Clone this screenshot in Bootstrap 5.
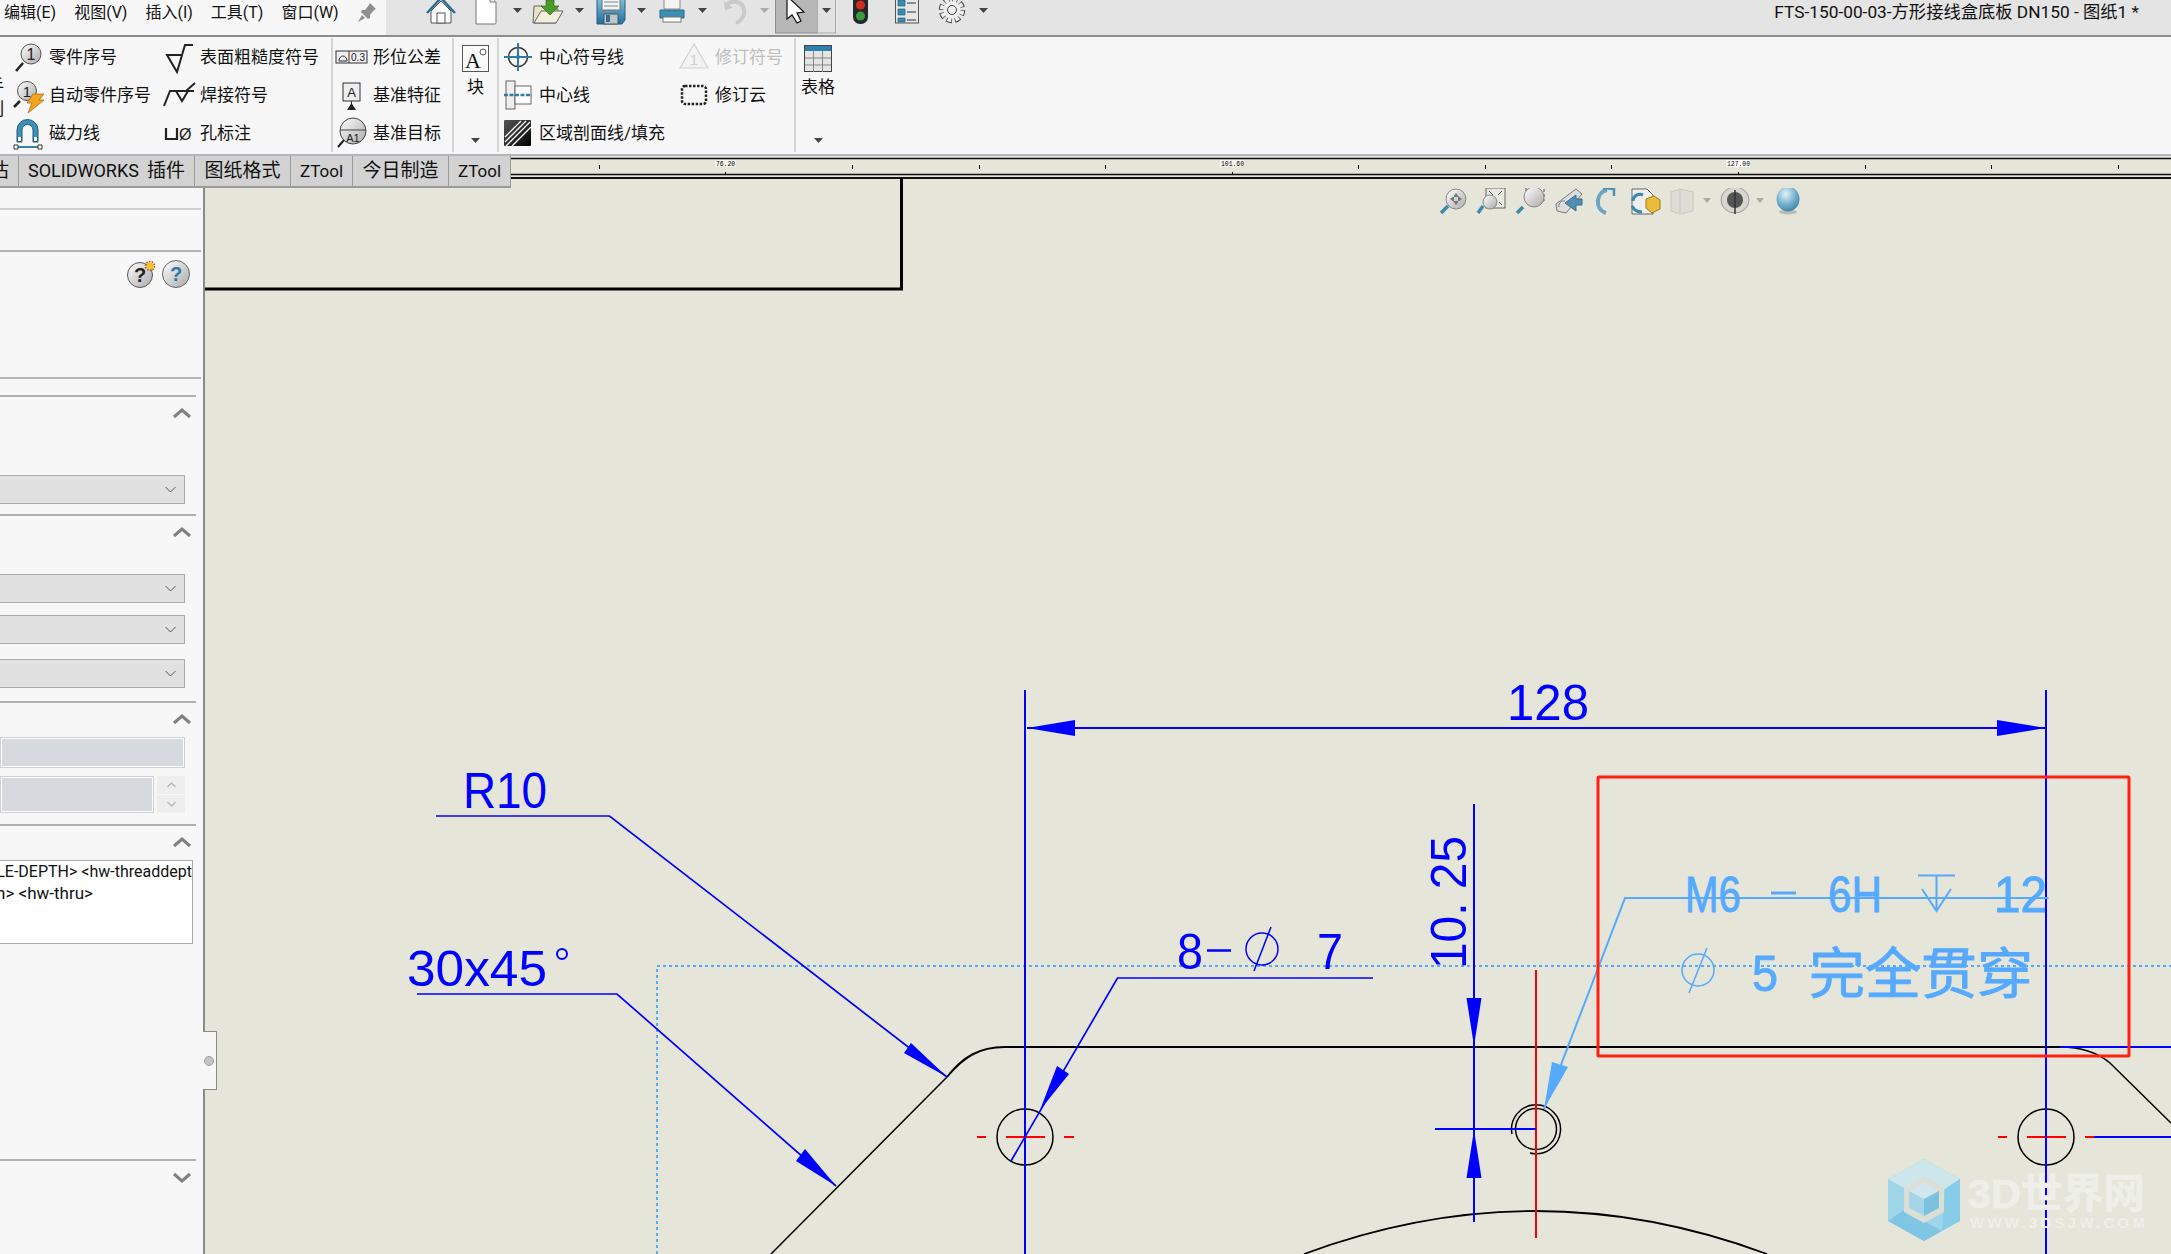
<!DOCTYPE html>
<html lang="zh">
<head>
<meta charset="UTF-8">
<title>SOLIDWORKS 图纸</title>
<link rel="stylesheet" href="https://cdn.jsdelivr.net/npm/bootstrap@5.3.0/dist/css/bootstrap.min.css">
<style>
    html, body { margin: 0; background: #e5e5da; }
    .app-frame { width: 2171px; height: 1254px; overflow: hidden; position: relative; color: #111; font-family: Roboto, "Noto Sans CJK SC", sans-serif; line-height: 1.2; }
    svg { display: block; flex: none; }

    /* top strip */
    .top-strip { height: 37px; background: #e4e4e4; border-bottom: 2px solid #8c8c8c; }
    .menu-zone { width: 386px; background: #f7f7f7; padding: 0 0 9px 4px; gap: 18px; font-size: 16px; white-space: nowrap; }
    .doc-title { margin-left: auto; padding: 0 32px 10px 0; font-size: 17.3px; white-space: nowrap; }

    /* ribbon */
    .ribbon-bar { height: 119px; background: #f7f7f7; border-bottom: 2px solid #b2b5bb; position: relative; font-size: 17px; overflow: hidden; }
    .rb-col { padding-top: 1px; }
    .rb-row { height: 38px; white-space: nowrap; }
    .rb-row svg { margin-right: 4px; }
    .rb-sep { border-left: 2px solid #d4d4d4; margin: 1px 0 2px; }
    .rb-c1 { width: 151px; margin-left: 11px; }
    .rb-c2 { width: 169px; }
    .rb-c3 { width: 117px; margin-left: 2px; }
    .rb-c4 { width: 176px; margin-left: 2px; }
    .rb-c5 { width: 117px; }
    .rb-block { width: 43px; padding-top: 8px; }
    .rb-block-t { width: 44px; padding-top: 8px; }
    .rb-block-label { height: 30px; }
    .rb-block-caret { margin-top: 36px; }
    .rb-off { color: #bdbdbd; }
    .edge-cut { position: absolute; left: -13px; font-size: 17px; }
    .edge-cut-a { top: 39px; }
    .edge-cut-b { top: 62px; }

    /* tab row and ruler */
    .tab-row { height: 32px; }
    .tab-cell { background: #d2d2d2; border-right: 1px solid #9a9a9a; border-bottom: 2px solid #9a9a9a; font-size: 19px; white-space: nowrap; overflow: hidden; }
    .tab-latin { font-size: 17px; }
    .tab-wide { font-size: 18px; }
    .tw-0 { width: 19px; justify-content: flex-end; padding-right: 9px; }
    .tw-1 { width: 176px; }
    .tw-2 { width: 96px; }
    .tw-3 { width: 62px; }
    .ruler-label { font: 8px "Liberation Mono", monospace; fill: #000; }

    /* left property panel */
    .pm-panel { width: 205px; height: 1066px; background: #f7f7f7; border-right: 2px solid #8a8a8a; flex: none; }
    .pm-line-a { height: 22px; border-bottom: 2px solid #d0d0d0; width: 201px; }
    .pm-line-b { height: 42px; border-bottom: 2px solid #b4b4b4; width: 201px; }
    .pm-help { height: 127px; border-bottom: 2px solid #b4b4b4; width: 201px; padding: 7px 11px 0 0; gap: 5px; }
    .pm-sec { width: 196px; border-top: 2px solid #b0b0b0; }
    .pm-sec-first { margin-top: 16px; height: 119px; }
    .pm-sec-b { height: 187px; }
    .pm-sec-c { height: 123px; }
    .pm-sec-d { height: 335px; }
    .pm-chev { height: 32px; padding-right: 5px; }
    .pm-combo { width: 185px; height: 29px; background: #e1e1e1; border: 1px solid #ababab; border-width: 1px 1px 1px 0; padding-right: 8px; }
    .gap-a { margin-top: 46px; }
    .gap-b { margin-top: 26px; }
    .gap-c { margin-top: 12px; }
    .gap-d { margin-top: 15px; }
    .gap-e { margin-top: 2px; }
    .gap-f { margin-top: 8px; }
    .pm-off { background: #d6d9dd; border: 2px solid #fff; outline: 1px solid #cfcfcf; outline-offset: -1px; }
    .pm-off-long { width: 185px; height: 31px; }
    .pm-off-short { width: 154px; height: 37px; }
    .pm-spin { width: 28px; height: 37px; margin-left: 3px; gap: 1px; }
    .pm-spin-btn { height: 18px; background: #eee; }
    .pm-note { width: 193px; height: 84px; margin-top: 2px; background: #fff; border: 1px solid #aaa; border-left: 0; padding-top: 1px; font-size: 16px; overflow: hidden; white-space: nowrap; }
    .pm-note-line { height: 21px; width: 192px; overflow: hidden; }
    .pm-note-short { width: 93px; font-size: 17px; }
    .pm-notch { position: absolute; left: 203px; top: 1031px; width: 14px; height: 59px; background: #f7f7f7; border: 1px solid #8a8a8a; border-left: 0; z-index: 2; }
    .pm-notch-dot { width: 10px; height: 10px; margin-left: 1px; border-radius: 50%; background: #c4c4c4; border: 1px solid #a0a0a0; }

    /* drawing */
    .cad-dim { font-family: "Liberation Sans", sans-serif; font-size: 50px; fill: #0000ff; }
    .cad-sel { fill: #55aaff; stroke: #55aaff; stroke-width: .9px; }
    .cad-cjk { font-family: "Noto Sans CJK SC", sans-serif; font-size: 55px; fill: #55aaff; stroke: #55aaff; stroke-width: .9px; }
    .wm-big { font-family: "Liberation Sans", "Noto Sans CJK SC", sans-serif; font-size: 41px; font-weight: 700; fill: #efefe9; stroke: #efefe9; stroke-width: .6px; }
    .wm-small { font-family: "Liberation Sans", sans-serif; font-size: 15px; font-weight: 700; fill: #efefe9; }
</style>
</head>
<body>
<svg width="0" height="0" class="position-absolute">
    <defs>
        <linearGradient id="gBall" x1="0" y1="0" x2="1" y2="1"><stop offset="0" stop-color="#fff"/><stop offset="1" stop-color="#a9a9a9"/></linearGradient>
        <linearGradient id="gBlue" x1="0" y1="0" x2="0" y2="1"><stop offset="0" stop-color="#8cc4dc"/><stop offset="1" stop-color="#1f6f9c"/></linearGradient>
        <linearGradient id="gDark" x1="0" y1="0" x2="1" y2="1"><stop offset="0" stop-color="#555"/><stop offset="1" stop-color="#000"/></linearGradient>
        <radialGradient id="gSphere" cx=".4" cy=".3" r=".8"><stop offset="0" stop-color="#e4f2f8"/><stop offset=".55" stop-color="#71afcc"/><stop offset="1" stop-color="#2f7ba0"/></radialGradient>
    </defs>
</svg>

<div class="app-frame d-flex flex-column">
    <!-- Menu and quick access -->
    <div class="top-strip d-flex flex-none">
        <div class="menu-zone d-flex align-items-center flex-none">
            <span>编辑(E)</span><span>视图(V)</span><span>插入(I)</span><span>工具(T)</span><span>窗口(W)</span>
            <svg width="20" height="22" viewBox="0 0 20 22"><path d="M13 1l6 6-2 1-4 5 0 3-2 1-7-7 1-2 3 0 4-5z" fill="#8f8f8f"/><path d="M5 13l-4 7 7-4z" fill="#8f8f8f"/></svg>
        </div>
        <svg width="614" height="35" viewBox="386 0 614 35">
            <!-- home -->
            <path d="M427 13L441-2l14 15" fill="none" stroke="#2c6f96" stroke-width="2.5"/>
            <path d="M431 11l10-10 10 10v12h-20z" fill="#fff" stroke="#555"/>
            <rect x="437" y="13" width="8" height="10" fill="#fff" stroke="#555"/>
            <!-- new -->
            <path d="M476-4h14l6 6v21a1 1 0 0 1-1 1h-19z" fill="#fff" stroke="#777"/><path d="M490-4v6h6" fill="#eee" stroke="#777"/>
            <path d="M513 8h9l-4.500 5z" fill="#444"/>
            <!-- open -->
            <path d="M533 23l1-17h8l3 3h13l-2 14z" fill="#e9e2c8" stroke="#666"/>
            <path d="M534 23l7-12h22l-7 12z" fill="#f3eedc" stroke="#666"/>
            <path d="M546 0h8v6h5l-9 9-9-9h5z" fill="#4d9a2c" stroke="#2d6a17" stroke-width=".7"/>
            <path d="M575 8h9l-4.500 5z" fill="#444"/>
            <!-- save -->
            <path d="M597-3h28v23l-3 4h-25z" fill="url(#gBlue)" stroke="#2a5f80"/>
            <rect x="602" y="-3" width="18" height="13" fill="#eef3f6" stroke="#777"/><path d="M604 2h14M604 6h14" stroke="#888"/>
            <rect x="604" y="14" width="14" height="10" fill="#bcc6cc" stroke="#555"/><rect x="606" y="15" width="4" height="7" fill="#3b6d8a"/>
            <path d="M637 8h9l-4.500 5z" fill="#444"/>
            <!-- print -->
            <rect x="664" y="-4" width="16" height="13" fill="#f4f4f4" stroke="#888"/>
            <path d="M660 10h24v8h-24z" fill="#3c8eb6" stroke="#2a6a8a"/>
            <rect x="663" y="17" width="18" height="5" fill="#fff" stroke="#777"/>
            <path d="M698 8h9l-4.500 5z" fill="#444"/>
            <!-- undo -->
            <path d="M726 6c4-6 17-6 18 4 1 6-3 11-8 13" fill="none" stroke="#c9c9c9" stroke-width="4"/><path d="M724 1l1 9 8-2z" fill="#c9c9c9"/>
            <path d="M760 8h9l-4.500 5z" fill="#aaa"/>
            <!-- select -->
            <rect x="775.500" y="-2" width="42" height="35" fill="#b7b7b7" stroke="#8e8e8e"/>
            <rect x="817.500" y="-2" width="18" height="35" fill="#e2e2e2" stroke="#ababab"/>
            <path d="M787-4v23l5-4 5 8 4-2-4-8 7-1z" fill="#fff" stroke="#111" stroke-width="1.200"/>
            <path d="M822 8h9l-4.500 5z" fill="#444"/>
            <!-- rebuild -->
            <rect x="853" y="-6" width="15" height="30" rx="7" fill="#23262a"/>
            <circle cx="860.500" cy="5" r="4.500" fill="#d62a20"/><circle cx="860.500" cy="16" r="4.500" fill="#3b9a3a"/>
            <!-- file props -->
            <rect x="895.500" y="-2" width="23" height="25" fill="#e6e6e6" stroke="#555"/>
            <path d="M898 0h7v6h-7zM898 9h7v6h-7zM898 18h7v4h-7z" fill="#3b8cb3" stroke="#22607f" stroke-width=".7"/>
            <path d="M907 3h9M907 12h9M907 20h9" stroke="#333" stroke-width="1.200"/>
            <!-- options -->
            <g transform="translate(952,10)">
                <circle r="10" fill="none" stroke="#444" stroke-width="6.500" stroke-dasharray="5 2.850"/>
                <circle r="10" fill="none" stroke="#efefef" stroke-width="4.400" stroke-dasharray="3.800 4.050" stroke-dashoffset="-.6"/>
                <circle r="8.500" fill="#efefef"/><circle r="4.500" fill="#efefef" stroke="#444"/>
            </g>
            <path d="M979 8h9l-4.500 5z" fill="#444"/>
        </svg>
        <div class="doc-title d-flex align-items-center">FTS-150-00-03-方形接线盒底板 DN150 - 图纸1 *</div>
    </div>

    <!-- Ribbon -->
    <div class="ribbon-bar d-flex flex-none">
        <span class="edge-cut edge-cut-a">手</span><span class="edge-cut edge-cut-b">列</span>
        <div class="rb-col rb-c1">
            <div class="rb-row d-flex align-items-center">
                <svg width="34" height="36" viewBox="0 0 34 36"><path d="M12 24L5 32" stroke="#222" stroke-width="2.500"/><circle cx="20" cy="15" r="10" fill="url(#gBall)" stroke="#555"/><text x="20" y="21" text-anchor="middle" font-size="16" font-family="Liberation Sans" fill="#222">1</text></svg>
                <span>零件序号</span>
            </div>
            <div class="rb-row d-flex align-items-center">
                <svg width="34" height="36" viewBox="0 0 34 36"><path d="M9 24L3 30" stroke="#222" stroke-width="2.500"/><circle cx="16" cy="14" r="9.500" fill="url(#gBall)" stroke="#555"/><text x="16" y="20" text-anchor="middle" font-size="15" font-family="Liberation Sans" fill="#222">1</text><path d="M22 17h11l-5 6h5L17 36l4-10h-5z" fill="#f2a51f" stroke="#b5690c" stroke-width=".8"/></svg>
                <span>自动零件序号</span>
            </div>
            <div class="rb-row d-flex align-items-center">
                <svg width="34" height="36" viewBox="0 0 34 36"><path d="M6 27V15a10.500 10.500 0 0 1 21 0v12h-5V15a5.500 5.500 0 0 0-11 0v12z" fill="#3f8fb8" stroke="#1f5f80"/><path d="M6.500 22v4.500h4V22M22.500 22v4.500h4V22" fill="#fff" stroke="#1f5f80"/><path d="M7 32h20" stroke="#2f84ad" stroke-width="2"/><path d="M3 30h4v4H3zM27 30h4v4h-4z" fill="#fff" stroke="#333"/></svg>
                <span>磁力线</span>
            </div>
        </div>
        <div class="rb-col rb-c2">
            <div class="rb-row d-flex align-items-center">
                <svg width="34" height="36" viewBox="0 0 34 36"><path d="M31 6h-8l-8 27-10-17h14" fill="none" stroke="#222" stroke-width="2"/></svg>
                <span>表面粗糙度符号</span>
            </div>
            <div class="rb-row d-flex align-items-center">
                <svg width="34" height="36" viewBox="0 0 34 36"><path d="M2 29l6-15h24M14 14l6 10 6-10M24 14l9-8" fill="none" stroke="#222" stroke-width="2"/></svg>
                <span>焊接符号</span>
            </div>
            <div class="rb-row d-flex align-items-center">
                <svg width="34" height="36" viewBox="0 0 34 36"><path d="M4 13v11h11V13" fill="none" stroke="#222" stroke-width="2.200"/><text x="17" y="25" font-size="16" font-family="Liberation Sans" fill="#222">Ø</text></svg>
                <span>孔标注</span>
            </div>
        </div>
        <div class="rb-sep"></div>
        <div class="rb-col rb-c3">
            <div class="rb-row d-flex align-items-center">
                <svg width="34" height="36" viewBox="0 0 34 36"><rect x="1" y="12" width="31" height="12" fill="#eee" stroke="#333"/><path d="M14 12v12" stroke="#333"/><path d="M4 22a4 5 0 0 1 8 0z" fill="none" stroke="#333"/><text x="23" y="22" text-anchor="middle" font-size="10" font-family="Liberation Sans" fill="#222">0.3</text></svg>
                <span>形位公差</span>
            </div>
            <div class="rb-row d-flex align-items-center">
                <svg width="34" height="36" viewBox="0 0 34 36"><rect x="8" y="6" width="17" height="18" fill="#eee" stroke="#333"/><text x="16.500" y="20" text-anchor="middle" font-size="13" font-family="Liberation Sans" fill="#222">A</text><path d="M16.500 24v6" stroke="#333"/><path d="M12 33l4.500-7 4.500 7z" fill="#222"/></svg>
                <span>基准特征</span>
            </div>
            <div class="rb-row d-flex align-items-center">
                <svg width="34" height="36" viewBox="0 0 34 36"><path d="M9 25L3 32" stroke="#222" stroke-width="2"/><circle cx="18" cy="16" r="13" fill="url(#gBall)" stroke="#444"/><path d="M5 15h26" stroke="#444"/><text x="18" y="27" text-anchor="middle" font-size="11" font-family="Liberation Sans" fill="#222">A1</text></svg>
                <span>基准目标</span>
            </div>
        </div>
        <div class="rb-sep"></div>
        <div class="rb-block d-flex flex-column align-items-center">
            <svg width="27" height="27" viewBox="0 0 27 27"><rect x=".5" y=".5" width="26" height="26" fill="#fbfbfb" stroke="#555"/><text x="11" y="23" text-anchor="middle" font-size="22" font-family="Liberation Serif" fill="#111">A</text><circle cx="21" cy="7" r="3" fill="none" stroke="#555"/></svg>
            <div class="rb-block-label d-flex align-items-center">块</div>
            <svg class="rb-block-caret" width="9" height="6" viewBox="0 0 9 6"><path d="M0 0h9L4.500 5z" fill="#444"/></svg>
        </div>
        <div class="rb-sep"></div>
        <div class="rb-col rb-c4">
            <div class="rb-row d-flex align-items-center">
                <svg width="34" height="36" viewBox="0 0 34 36"><circle cx="17" cy="18" r="9.500" fill="none" stroke="#333" stroke-width="1.500"/><path d="M3 18h28M17 4v28" stroke="#2c7aa6" stroke-width="2"/><circle cx="17" cy="18" r="2" fill="#2c7aa6"/></svg>
                <span>中心符号线</span>
            </div>
            <div class="rb-row d-flex align-items-center">
                <svg width="34" height="36" viewBox="0 0 34 36"><rect x="5" y="4" width="9" height="28" fill="#eee" stroke="#666"/><rect x="14" y="9" width="16" height="18" fill="#fff" stroke="#666"/><path d="M3 18h28" stroke="#2c7aa6" stroke-width="2.500" stroke-dasharray="4 1.500"/></svg>
                <span>中心线</span>
            </div>
            <div class="rb-row d-flex align-items-center">
                <svg width="34" height="36" viewBox="0 0 34 36"><rect x="3" y="5" width="27" height="26" rx="1" fill="url(#gDark)"/><path d="M4 22L20 6M4 27L25 6M5 31L29 7M11 31l19-19" stroke="#fff" stroke-width="1.300"/></svg>
                <span>区域剖面线/填充</span>
            </div>
        </div>
        <div class="rb-col rb-c5">
            <div class="rb-row d-flex align-items-center rb-off">
                <svg width="34" height="36" viewBox="0 0 34 36"><path d="M17 5L3 29h28z" fill="#f3f3f3" stroke="#d2d2d2" stroke-width="1.200"/><text x="17" y="26" text-anchor="middle" font-size="15" font-family="Liberation Sans" fill="#cfcfcf">1</text></svg>
                <span>修订符号</span>
            </div>
            <div class="rb-row d-flex align-items-center">
                <svg width="34" height="36" viewBox="0 0 34 36"><rect x="5" y="9" width="24" height="18" rx="3" fill="none" stroke="#222" stroke-width="2.500" stroke-dasharray="2.500 1.500"/></svg>
                <span>修订云</span>
            </div>
        </div>
        <div class="rb-sep"></div>
        <div class="rb-block-t d-flex flex-column align-items-center">
            <svg width="28" height="27" viewBox="0 0 28 27"><rect x=".5" y=".5" width="27" height="26" fill="#e4e4e4" stroke="#444"/><rect x="1" y="1" width="26" height="5" fill="#2c82ad"/><path d="M1 13h26M1 20h26M9.500 6v21M18.500 6v21" stroke="#888"/></svg>
            <div class="rb-block-label d-flex align-items-center">表格</div>
            <svg class="rb-block-caret" width="9" height="6" viewBox="0 0 9 6"><path d="M0 0h9L4.500 5z" fill="#444"/></svg>
        </div>
    </div>

    <!-- Command tabs and ruler -->
    <div class="tab-row d-flex flex-none">
        <div class="tab-cell tw-0 d-flex align-items-center">评估</div>
        <div class="tab-cell tw-1 d-flex align-items-center justify-content-center"><span class="tab-wide me-2">SOLIDWORKS</span>插件</div>
        <div class="tab-cell tw-2 d-flex align-items-center justify-content-center">图纸格式</div>
        <div class="tab-cell tw-3 d-flex align-items-center justify-content-center tab-latin">ZTool</div>
        <div class="tab-cell tw-2 d-flex align-items-center justify-content-center">今日制造</div>
        <div class="tab-cell tw-3 d-flex align-items-center justify-content-center tab-latin">ZTool</div>
        <svg width="1660" height="32" viewBox="511 156 1660 32">
            <rect x="511" y="156" width="1660" height="32" fill="#e5e5da"/>
            <path d="M511 158.500h1660M511 174.500h1660" stroke="#111" stroke-width="1.500"/>
            <path d="M511 178h1660" stroke="#111" stroke-width="2"/>
            <path d="M852.500 165v4M979.500 165v4M1105.500 165v4M1358.500 165v4M1485.500 165v4M1611.500 165v4M1865.500 165v4M1991.500 165v4M2118.500 165v4M599.500 165v4M725.500 172v2M1232.500 172v2M1738.500 172v2" stroke="#111"/>
            <rect x="715" y="160" width="21" height="7" fill="#f6f6f0"/><text class="ruler-label" x="716" y="166" textLength="19" lengthAdjust="spacingAndGlyphs">76.20</text>
            <rect x="1220" y="160" width="24" height="7" fill="#f6f6f0"/><text class="ruler-label" x="1221" y="166" textLength="23" lengthAdjust="spacingAndGlyphs">101.60</text>
            <rect x="1726" y="160" width="24" height="7" fill="#fff"/><text class="ruler-label" x="1727" y="166" textLength="23" lengthAdjust="spacingAndGlyphs">127.00</text>
            <path d="M901.500 178v10" stroke="#000" stroke-width="3"/>
        </svg>
    </div>

    <div class="d-flex flex-grow-1">
        <!-- Property manager -->
        <div class="pm-panel">
            <div class="pm-line-a"></div>
            <div class="pm-line-b"></div>
            <div class="pm-help d-flex justify-content-end align-items-start">
                <svg width="30" height="29" viewBox="0 0 30 29"><circle cx="13" cy="16" r="12.500" fill="url(#gBall)" stroke="#555"/><text x="13" y="23" text-anchor="middle" font-size="20" font-weight="700" font-family="Liberation Sans" fill="#222">?</text><circle cx="23" cy="7" r="3.500" fill="#f6c21c"/><circle cx="23" cy="7" r="4.500" fill="none" stroke="#b5510c" stroke-width="1.500" stroke-dasharray="1.500 1.300"/></svg>
                <svg width="28" height="29" viewBox="0 0 28 29"><circle cx="14" cy="15" r="13.500" fill="url(#gBall)" stroke="#666"/><text x="14" y="22" text-anchor="middle" font-size="20" font-weight="700" font-family="Liberation Sans" fill="#2a7ba6">?</text></svg>
            </div>

            <div class="pm-sec pm-sec-first">
                <div class="pm-chev d-flex justify-content-end align-items-center"><svg width="18" height="11" viewBox="0 0 18 11"><path d="M1 9l8-7 8 7" fill="none" stroke="#808080" stroke-width="3"/></svg></div>
                <div class="pm-combo gap-a d-flex justify-content-end align-items-center"><svg width="11" height="7" viewBox="0 0 11 7"><path d="M.5 1l5 5 5-5" fill="none" stroke="#555"/></svg></div>
            </div>
            <div class="pm-sec pm-sec-b">
                <div class="pm-chev d-flex justify-content-end align-items-center"><svg width="18" height="11" viewBox="0 0 18 11"><path d="M1 9l8-7 8 7" fill="none" stroke="#808080" stroke-width="3"/></svg></div>
                <div class="pm-combo gap-b d-flex justify-content-end align-items-center"><svg width="11" height="7" viewBox="0 0 11 7"><path d="M.5 1l5 5 5-5" fill="none" stroke="#555"/></svg></div>
                <div class="pm-combo gap-c d-flex justify-content-end align-items-center"><svg width="11" height="7" viewBox="0 0 11 7"><path d="M.5 1l5 5 5-5" fill="none" stroke="#555"/></svg></div>
                <div class="pm-combo gap-d d-flex justify-content-end align-items-center"><svg width="11" height="7" viewBox="0 0 11 7"><path d="M.5 1l5 5 5-5" fill="none" stroke="#555"/></svg></div>
            </div>
            <div class="pm-sec pm-sec-c">
                <div class="pm-chev d-flex justify-content-end align-items-center"><svg width="18" height="11" viewBox="0 0 18 11"><path d="M1 9l8-7 8 7" fill="none" stroke="#808080" stroke-width="3"/></svg></div>
                <div class="pm-off pm-off-long gap-e"></div>
                <div class="d-flex gap-f">
                    <div class="pm-off pm-off-short"></div>
                    <div class="pm-spin d-flex flex-column">
                        <div class="pm-spin-btn d-flex justify-content-center align-items-center"><svg width="9" height="6" viewBox="0 0 9 6"><path d="M.5 5l4-4 4 4" fill="none" stroke="#bbb" stroke-width="1.500"/></svg></div>
                        <div class="pm-spin-btn d-flex justify-content-center align-items-center"><svg width="9" height="6" viewBox="0 0 9 6"><path d="M.5 1l4 4 4-4" fill="none" stroke="#bbb" stroke-width="1.500"/></svg></div>
                    </div>
                </div>
            </div>
            <div class="pm-sec pm-sec-d">
                <div class="pm-chev d-flex justify-content-end align-items-center"><svg width="18" height="11" viewBox="0 0 18 11"><path d="M1 9l8-7 8 7" fill="none" stroke="#808080" stroke-width="3"/></svg></div>
                <div class="pm-note">
                    <div class="pm-note-line d-flex justify-content-end">&lt;HOLE-DEPTH&gt; &lt;hw-threaddept</div>
                    <div class="pm-note-line pm-note-short d-flex justify-content-end">&lt;hw-threaddepth&gt; &lt;hw-thru&gt;</div>
                </div>
            </div>
            <div class="pm-sec">
                <div class="pm-chev d-flex justify-content-end align-items-center"><svg width="18" height="11" viewBox="0 0 18 11"><path d="M1 2l8 7 8-7" fill="none" stroke="#808080" stroke-width="3"/></svg></div>
            </div>
        </div>
        <div class="pm-notch d-flex align-items-center"><div class="pm-notch-dot"></div></div>

        <!-- Drawing sheet -->
        <svg width="1966" height="1066" viewBox="205 188 1966 1066">
            <!-- sheet corner -->
            <path d="M205 289H901.500V188" fill="none" stroke="#000" stroke-width="3"/>

            <!-- view toolbar -->
            <g fill="none" stroke="#888">
                <path d="M1448 206l-7 7" stroke="#3f88ad" stroke-width="3.500"/><circle cx="1456" cy="199" r="10" fill="url(#gBall)"/><path d="M1456 193l-3 4h6zM1456 205l-3-4h6zM1450 199l4-3v6zM1462 199l-4-3v6z" fill="#777" stroke="none"/>
                <rect x="1486" y="188" width="19" height="20" fill="#e8e8e0" stroke="#666"/><path d="M1489 191l4 4M1502 191l-4 4M1502 205l-3-3" stroke="#555"/><path d="M1483 206l-5 7" stroke="#3f88ad" stroke-width="3.500"/><circle cx="1490" cy="202" r="7" fill="url(#gBall)"/>
                <rect x="1526" y="187" width="18" height="14" stroke="#555" stroke-dasharray="3 2"/><path d="M1523 207l-6 6" stroke="#3f88ad" stroke-width="3.500"/><circle cx="1534" cy="197" r="10" fill="url(#gBall)"/>
                <path d="M1556 204l20-15 6 5-16 19-9-2z" fill="#ddd" stroke="#777"/><path d="M1559 207a5 5 0 0 1 6-6" stroke="#777"/><path d="M1582 199v6h-6v6l-11-8 11-8v4h6" fill="#4f90b2" stroke="#356f90"/>
                <path d="M1607 190c-11 2-13 19-1 23" stroke="#6aa6c4" stroke-width="4"/><path d="M1603 188l11 1 0 7" stroke="#4f90b2" stroke-width="2.500"/>
                <path d="M1632 189h15l6 6v19h-21z" fill="#eee" stroke="#666"/><path d="M1646 199l8-3 6 4v9l-8 4-6-5z" fill="#e9bc3c" stroke="#a37a13"/><path d="M1632 206c2 4 6 6 10 6M1633 201c0-5 5-8 10-6" stroke="#3f88ad" stroke-width="3"/>
                <path d="M1671 192l9-3 13 3v19l-13 3-9-3z" fill="#ddddd5" stroke="#c8c8c0"/><path d="M1680 190v23" stroke="#c8c8c0"/>
                <path d="M1703 198h8l-4 5z" fill="#aaa" stroke="none"/>
                <ellipse cx="1735" cy="200" rx="14" ry="13" fill="#d7d7cf" stroke="#999"/><circle cx="1735" cy="200" r="8" fill="#555" stroke="none"/><path d="M1735 190v24" stroke="#333" stroke-width="1.500"/>
                <path d="M1756 198h8l-4 5z" fill="#aaa" stroke="none"/>
                <ellipse cx="1788" cy="212" rx="9" ry="2.500" fill="#bdbdb5" stroke="none"/><ellipse cx="1788" cy="199" rx="11.500" ry="12.500" fill="url(#gSphere)" stroke="none"/>
            </g>

            <!-- part outline -->
            <g fill="none" stroke="#000">
                <path d="M771 1254L947 1077" stroke-width="1.500"/>
                <path d="M947 1077c16-20 32-30 58-30H2060" stroke-width="2"/>
                <path d="M2060 1047c22 0 38 6 50 16L2171 1123" stroke-width="1.500"/>
                <path d="M1304 1254Q1535 1168 1767 1254" stroke-width="1.800"/>
                <circle cx="1025" cy="1137" r="28" stroke-width="1.500"/>
                <circle cx="2046" cy="1137" r="28" stroke-width="1.500"/>
                <circle cx="1536" cy="1129" r="20.500" stroke-width="1.500"/>
                <path d="M1512 1134A24.500 24.500 0 1 1 1530 1153" stroke-width="1.500"/>
            </g>

            <!-- centre marks -->
            <path d="M977 1137h9M1006 1137h39M1064 1137h10M1998 1137h9M2027 1137h39M2085 1137h9" stroke="#ff0000" stroke-width="2" fill="none"/>
            <path d="M1536 970V1238" stroke="#ff0000" stroke-width="2"/>

            <!-- selection limit -->
            <path d="M657 1254V966H2171" fill="none" stroke="#55aaff" stroke-width="2" stroke-dasharray="3 3"/>

            <!-- dimensions -->
            <g fill="none" stroke="#0000ff">
                <path d="M1025 690V1254M2046 690V1254" stroke-width="2"/>
                <path d="M1027 728H2046" stroke-width="2"/>
                <path d="M2060 1047H2171M2094 1137H2171" stroke-width="2"/>
                <path d="M436 816H609.500L947 1077" stroke-width="1.700"/>
                <path d="M417 994H617L836 1186" stroke-width="1.700"/>
                <path d="M1373 978H1117.500L1011 1161" stroke-width="1.700"/>
                <path d="M1474 804V1222M1435 1129H1536" stroke-width="2"/>
            </g>
            <g fill="#0000ff">
                <path d="M1027 728l48-8v16zM2046 728l-49-8v16z"/>
                <path d="M947 1077L911 1043l-7 10z"/>
                <path d="M836 1186L805 1149l-9 12z"/>
                <path d="M1040 1110l17-44 12 8z"/>
                <path d="M1474 1046l-7.500-48h15zM1474 1130l-7.500 48h15z"/>
            </g>
            <text class="cad-dim" x="463" y="808" textLength="84" lengthAdjust="spacingAndGlyphs">R10</text>
            <text class="cad-dim" x="407" y="986" textLength="140" lengthAdjust="spacingAndGlyphs">30x45</text>
            <circle cx="562" cy="954" r="5" fill="none" stroke="#0000ff" stroke-width="2"/>
            <text class="cad-dim" x="1507" y="720" textLength="82" lengthAdjust="spacingAndGlyphs">128</text>
            <text class="cad-dim" x="1466" y="969" transform="rotate(-90 1466 969)" textLength="133" lengthAdjust="spacingAndGlyphs">10. 25</text>
            <text class="cad-dim" x="1177" y="969" textLength="26" lengthAdjust="spacingAndGlyphs">8</text>
            <path d="M1207 950.500h24" stroke="#0000ff" stroke-width="2.500"/>
            <circle cx="1262" cy="949" r="16" fill="none" stroke="#0000ff" stroke-width="1.500"/>
            <path d="M1254 971L1271 927" stroke="#0000ff" stroke-width="1.500"/>
            <text class="cad-dim" x="1317" y="969" textLength="26" lengthAdjust="spacingAndGlyphs">7</text>

            <!-- selected hole callout -->
            <g fill="none" stroke="#55aaff">
                <path d="M2048.500 898H1625L1544 1109" stroke-width="2"/>
                <path d="M1771 893h25" stroke-width="3"/>
                <path d="M1918 875.500h37M1936.500 875v36M1922 889l14.500 22 14.500-22" stroke-width="2"/>
                <circle cx="1698" cy="970" r="16" stroke-width="1.500"/>
                <path d="M1689 993L1707 948" stroke-width="1.500"/>
            </g>
            <path d="M1544 1109l8-47 16 5z" fill="#55aaff"/>
            <text class="cad-dim cad-sel" x="1685" y="912" textLength="56" lengthAdjust="spacingAndGlyphs">M6</text>
            <text class="cad-dim cad-sel" x="1828" y="912" textLength="54" lengthAdjust="spacingAndGlyphs">6H</text>
            <text class="cad-dim cad-sel" x="1994" y="912" textLength="53" lengthAdjust="spacingAndGlyphs">12</text>
            <text class="cad-dim cad-sel" x="1752" y="991" textLength="26" lengthAdjust="spacingAndGlyphs">5</text>
            <text class="cad-cjk" x="1809" y="993" textLength="224" lengthAdjust="spacingAndGlyphs">完全贯穿</text>

            <!-- red markup box -->
            <rect x="1598" y="777" width="531" height="279" rx="1" fill="none" stroke="#ff2010" stroke-width="3"/>

            <!-- watermark -->
            <path d="M1924 1159l36 20v42l-36 20-36-20v-42z" fill="#9fd5e9"/>
            <path d="M1924 1159l36 20-15 10-21-12-18 12-18-10z" fill="#cde6ec"/>
            <path d="M1960 1179v42l-18 10 3-42z" fill="#88cde8"/>
            <path d="M1888 1221l36 20 18-10-18-10-20-11z" fill="#7fc6e4"/>
            <path d="M1924 1177l20 11v24l-20 11-20-11v-24z" fill="#dcdfd6"/>
            <path d="M1924 1183l15 8-15 8-15-8z" fill="#d0e7ed"/><path d="M1909 1191l15 8v17l-15-8z" fill="#a4d6e8"/><path d="M1939 1191l-15 8v17l15-8z" fill="#7cc2df"/>
            <text class="wm-big" x="1968" y="1208" textLength="177" lengthAdjust="spacingAndGlyphs">3D世界网</text>
            <text class="wm-small" x="1970" y="1228" textLength="175" lengthAdjust="spacing">WWW.3DSJW.COM</text>
        </svg>
    </div>
</div>
<script src="https://cdn.jsdelivr.net/npm/bootstrap@5.3.0/dist/js/bootstrap.bundle.min.js"></script>
</body>
</html>
